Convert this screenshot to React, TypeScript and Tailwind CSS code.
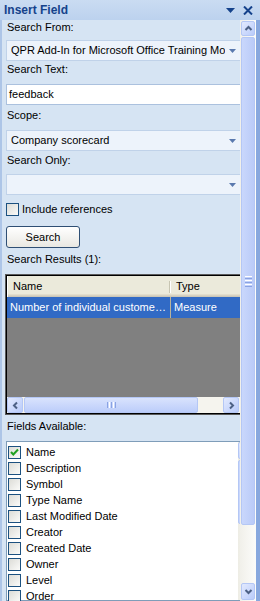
import React from "react";

type Dir = "up" | "down" | "left" | "right";

const arrowPoints: Record<Dir, string> = {
  up: "1.5,6 4.5,3 7.5,6",
  down: "1.5,3 4.5,6 7.5,3",
  left: "6,1.5 3,4.5 6,7.5",
  right: "3,1.5 6,4.5 3,7.5",
};

function Arrow({ dir }: { dir: Dir }) {
  return (
    <svg width="9" height="9" viewBox="0 0 9 9">
      <polyline points={arrowPoints[dir]} fill="none" stroke="#4d6185" strokeWidth="2" />
    </svg>
  );
}

function ScrollButton({ dir, className = "" }: { dir: Dir; className?: string }) {
  return (
    <div
      className={`flex shrink-0 items-center justify-center rounded-[2px] border border-[#b4c7f5] bg-gradient-to-br from-[#e3eafe] to-[#b9cbfa] ${className}`}
    >
      <Arrow dir={dir} />
    </div>
  );
}

function DropArrow() {
  return (
    <svg width="7" height="4" viewBox="0 0 7 4" className="shrink-0">
      <polygon points="0,0 7,0 3.5,4" fill="#5a79ae" />
    </svg>
  );
}

function Dropdown({ text = "", className = "" }: { text?: string; className?: string }) {
  return (
    <div className={`flex h-[21px] w-[240px] shrink-0 items-center border border-[#c0d2e9] bg-[#edf3fb] pl-[4px] ${className}`}>
      <span className="w-[214px] overflow-hidden whitespace-nowrap">{text}</span>
      <span className="ml-[4px]">
        <DropArrow />
      </span>
    </div>
  );
}

function Label({ children, className = "" }: { children: React.ReactNode; className?: string }) {
  return <div className={`h-[13px] shrink-0 pl-[1px] leading-[13px] ${className}`}>{children}</div>;
}

function CheckBox({ checked = false }: { checked?: boolean }) {
  return (
    <div className="flex h-[13px] w-[13px] shrink-0 items-center justify-center border border-[#1c5180] bg-gradient-to-br from-[#dcdcd7] to-[#fbfbf9]">
      {checked && (
        <svg width="11" height="11" viewBox="0 0 11 11">
          <polyline points="2,5 4.3,7.5 9,2.5" fill="none" stroke="#21a121" strokeWidth="2" />
        </svg>
      )}
    </div>
  );
}

const fields = [
  "Name",
  "Description",
  "Symbol",
  "Type Name",
  "Last Modified Date",
  "Creator",
  "Created Date",
  "Owner",
  "Level",
  "Order",
];

export default function App() {
  return (
    <div className="flex h-[601px] w-[260px] flex-col overflow-hidden bg-[#d6e4f3] font-['Liberation_Sans',Arial,sans-serif] text-[11px] text-black">
      {/* title bar */}
      <div className="flex h-[20px] shrink-0 items-center bg-gradient-to-b from-[#cadcf2] to-[#bcd2ee] pl-[4px]">
        <span className="text-[12px] font-bold text-[#15428b]">Insert Field</span>
        <svg width="9" height="5" viewBox="0 0 9 5" className="ml-auto mr-[8px] mt-[1px]">
          <polygon points="0,0 9,0 4.5,5" fill="#15428b" />
        </svg>
        <svg width="10" height="9" viewBox="0 0 10 9" className="mr-[7px]">
          <path d="M1 0.5 L9 8.5 M9 0.5 L1 8.5" stroke="#15428b" strokeWidth="2" />
        </svg>
      </div>

      <div className="flex min-h-0 flex-1">
        {/* content */}
        <div className="flex w-[240px] shrink-0 flex-col overflow-hidden border-l-2 border-[#adc5e7] pl-[4px]">
          <Label className="mt-[1px]">Search From:</Label>
          <Dropdown className="mt-[6px]" text="QPR Add-In for Microsoft Office Training Model" />
          <Label className="mt-[2px]">Search Text:</Label>
          <div className="mt-[8px] flex h-[21px] w-[240px] shrink-0 items-center border border-[#abc1de] bg-white pl-[2px]">
            feedback
          </div>
          <Label className="mt-[4px]">Scope:</Label>
          <Dropdown className="mt-[8px]" text="Company scorecard" />
          <Label className="mt-[3px]">Search Only:</Label>
          <Dropdown className="mt-[7px]" />
          <div className="mt-[8px] flex h-[13px] shrink-0 items-center">
            <CheckBox />
            <span className="ml-[3px]">Include references</span>
          </div>
          <button className="mt-[10px] flex h-[22px] w-[74px] shrink-0 items-center justify-center rounded-[3px] border border-[#2f4f74] bg-gradient-to-b from-white to-[#e9e8e2] text-[11px]">
            Search
          </button>
          <Label className="mt-[5px]">Search Results (1):</Label>

          {/* results table */}
          <div className="-ml-[1px] mt-[8px] w-[237px] shrink-0 border border-[#5a5a5a]">
            <div className="border border-black">
              <div className="flex h-[21px] items-center bg-[#ebeadb] shadow-[inset_1px_0_0_#fff,inset_0_-1px_0_#cbc7b8,inset_0_-2px_0_#d6d2c2,inset_0_-3px_0_#e2decd]">
                <span className="w-[162px] pl-[6px]">Name</span>
                <span className="h-[12px] w-[2px] border-l border-r border-l-[#c7c5b2] border-r-white" />
                <span className="pl-[5px]">Type</span>
              </div>
              <div className="flex h-[21px] items-center bg-[#316ac5] text-white">
                <span className="w-[163px] overflow-hidden whitespace-nowrap pl-[3px]">Number of individual custome…</span>
                <span className="h-full w-[1px] bg-[#b9b49c]" />
                <span className="pl-[3px]">Measure</span>
              </div>
              <div className="h-[79px] bg-[#808080]" />
              <div className="flex h-[16px] bg-[#f5f4ee]">
                <ScrollButton dir="left" className="w-[16px]" />
                <div className="ml-[1px] flex w-[174px] items-center justify-center rounded-[2px] border border-[#b4c7f5] bg-gradient-to-b from-[#d9e3fd] to-[#bccdfa]">
                  <div className="flex gap-[1px]">
                    <span className="h-[6px] w-[1px] bg-[#8aa3e3]" />
                    <span className="h-[6px] w-[1px] bg-white" />
                    <span className="h-[6px] w-[1px] bg-[#8aa3e3]" />
                    <span className="h-[6px] w-[1px] bg-white" />
                    <span className="h-[6px] w-[1px] bg-[#8aa3e3]" />
                  </div>
                </div>
                <div className="flex-1" />
                <ScrollButton dir="right" className="mr-[1px] w-[16px]" />
              </div>
            </div>
          </div>

          <Label className="mt-[5px]">Fields Available:</Label>

          {/* fields list */}
          <div className="mt-[8px] flex min-h-0 w-[252px] flex-1 shrink-0 border border-[#7f9db9] bg-white">
            <div className="flex w-[231px] flex-col pl-[1px] pt-[2px]">
              {fields.map((f, i) => (
                <div key={f} className="flex h-[16px] shrink-0 items-center">
                  <CheckBox checked={i === 0} />
                  <span className="ml-[5px]">{f}</span>
                </div>
              ))}
            </div>
            <div className="flex w-[17px] flex-col bg-gradient-to-r from-[#eeede5] to-[#fbfbf8]">
              <ScrollButton dir="up" className="h-[17px]" />
              <div className="mt-[1px] h-[64px] rounded-[2px] border border-[#b4c7f5] bg-[#c9d7fb]" />
            </div>
          </div>
        </div>

        {/* outer scrollbar */}
        <div className="flex w-[16px] shrink-0 flex-col bg-gradient-to-r from-[#f1f0ea] to-[#fcfcfa] px-[1px] pb-[1px] pt-[1px]">
          <ScrollButton dir="up" className="h-[15px]" />
          <div className="mt-[1px] flex h-[488px] shrink-0 items-center justify-center rounded-[2px] border border-[#b4c7f5] bg-gradient-to-r from-[#c9d7fc] to-[#bacbf8]">
            <div className="flex flex-col gap-[1px]">
              <span className="h-[1px] w-[7px] bg-white" />
              <span className="h-[1px] w-[7px] bg-[#8aa3e3]" />
              <span className="h-[1px] w-[7px] bg-white" />
              <span className="h-[1px] w-[7px] bg-[#8aa3e3]" />
              <span className="h-[1px] w-[7px] bg-white" />
              <span className="h-[1px] w-[7px] bg-[#8aa3e3]" />
            </div>
          </div>
          <div className="flex-1" />
          <ScrollButton dir="down" className="h-[17px]" />
        </div>
        <div className="w-[4px] shrink-0 bg-[#88a8de]" />
      </div>
    </div>
  );
}
